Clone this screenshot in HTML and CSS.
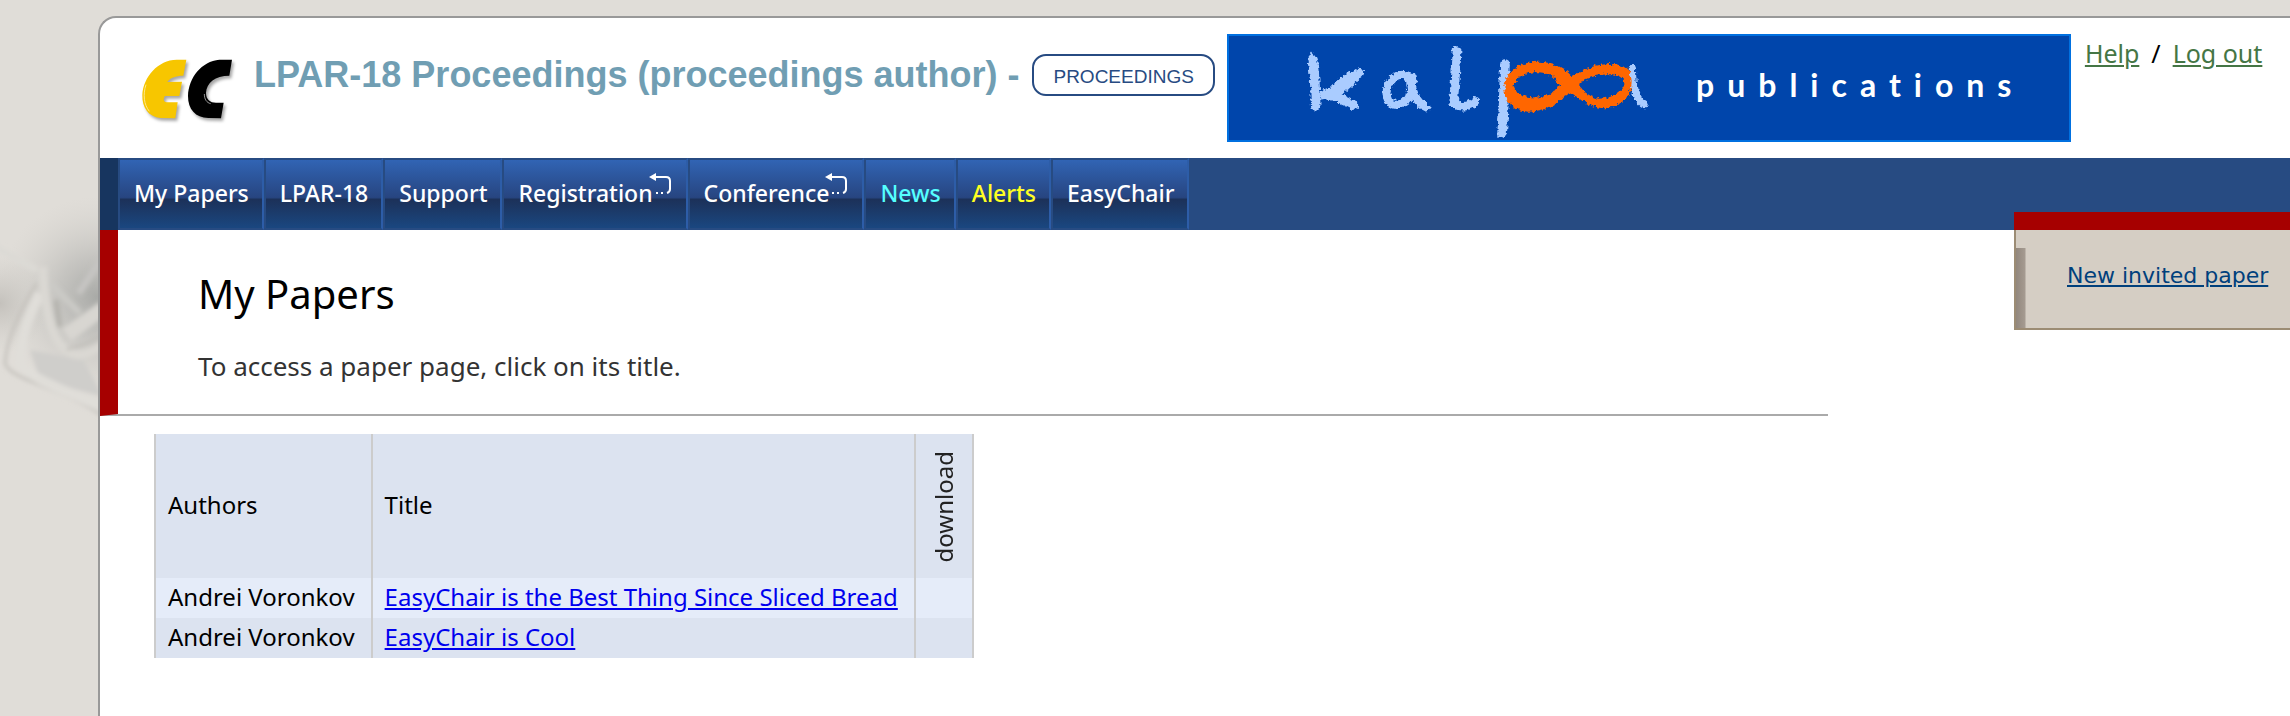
FILE: index.html
```html
<!DOCTYPE html>
<html lang="en">
<head>
<meta charset="utf-8">
<title>My Papers</title>
<link rel="stylesheet" href="styles.css">
</head>
<body>
<svg class="backdrop" width="98" height="560" viewBox="0 0 294 1680" aria-hidden="true">
  <defs>
    <filter id="soft" filterUnits="userSpaceOnUse" x="-60" y="0" width="440" height="1000"><feGaussianBlur stdDeviation="6"/></filter>
    <radialGradient id="shade" gradientUnits="userSpaceOnUse" cx="290" cy="440" r="300">
      <stop offset="0" stop-color="#a9aaa7"/>
      <stop offset=".4" stop-color="#b4b4b1" stop-opacity=".6"/>
      <stop offset="1" stop-color="#d0cec9" stop-opacity="0"/>
    </radialGradient>
    <radialGradient id="dusk" gradientUnits="userSpaceOnUse" cx="0" cy="460" r="150">
      <stop offset="0" stop-color="#c4c1bc"/>
      <stop offset="1" stop-color="#d0cec9" stop-opacity="0"/>
    </radialGradient>
  </defs>
  <g transform="translate(0 450)">
    <rect width="300" height="900" fill="url(#shade)"/>
    <rect width="300" height="900" fill="url(#dusk)"/>
    <g fill="none" filter="url(#soft)">
      <path d="M90 600 L250 630 L310 740 L120 690Z" fill="#cfcecb"/>
      <path d="M110 400 C60 480 20 560 15 640 C30 690 180 710 310 798" stroke="#c6c3be" stroke-width="9"/>
      <path d="M120 430 C80 510 60 570 62 640 C90 690 200 720 310 775" stroke="#e0ded9" stroke-width="30"/>
      <path d="M-20 288 L110 360" stroke="#dcdad5" stroke-width="20"/>
      <path d="M168 450 L180 530" stroke="#b5b4af" stroke-width="16"/>
      <path d="M150 400 L240 490" stroke="#cbcac6" stroke-width="18"/>
      <path d="M200 555 L310 475" stroke="#d8d6d1" stroke-width="44"/>
      <path d="M128 350 C135 480 150 600 230 615 C265 615 285 600 310 585" stroke="#dad8d3" stroke-width="26"/>
      <path d="M200 598 C240 590 270 575 310 555" stroke="#bfbdb8" stroke-width="7"/>
      <path d="M235 430 L310 320" stroke="#c6c5c2" stroke-width="20"/>
    </g>
  </g>
</svg>
<div class="panel">
  <header class="header">
    <svg class="logo" width="120" height="80" viewBox="0 0 360 240" role="img" aria-label="EasyChair">
      <g class="logo-shapes">
        <path fill="#f7c600" d="M169 29 L160 77 C138 77 118 84 112 96 L156 95 L148 138 L105 138 C99 146 100 156 110 157 L143 157 L136 205 L92 204 C54 200 36 172 37 135 C40 80 84 30 140 29Z"/>
        <path d="M306 29 L298 77 C255 77 230 98 228 128 C228 148 240 158 258 158 L281 158 L273 205 L235 204 C196 203 174 178 174 138 C176 82 215 34 268 29Z"/>
      </g>
      <path d="M48 104 C38 134 42 164 58 184" fill="none" stroke="#ffe98a" stroke-width="3"/>
      <path d="M223 132 C223 148 230 158 242 161" fill="none" stroke="#ddd" stroke-width="2"/>
    </svg>
    <h1 class="conference">LPAR-18 Proceedings (proceedings author) -</h1>
    <button class="role" type="button">PROCEEDINGS</button>
    <svg class="banner" width="844" height="108" viewBox="0 0 844 108" role="img" aria-label="kalpa publications">
      <defs>
        <filter id="brush" x="-5%" y="-5%" width="110%" height="110%">
          <feTurbulence type="fractalNoise" baseFrequency="0.3" numOctaves="2" seed="4"/>
          <feDisplacementMap in="SourceGraphic" scale="6" xChannelSelector="R" yChannelSelector="G"/>
        </filter>
      </defs>
      <rect x="1" y="1" width="842" height="106" fill="#0045ab" stroke="#0070e0" stroke-width="2"/>
      <g filter="url(#brush)">
        <g transform="translate(-16 -14) scale(.33333)" fill="none" stroke="#aaccff" stroke-width="29" stroke-linecap="round" stroke-linejoin="round">
          <path d="M303 116 C312 160 313 200 314 258"/>
          <path d="M446 158 C420 175 395 205 340 224 C375 225 410 245 428 256" stroke-width="27"/>
          <path d="M420 175 L380 208" stroke-width="40"/>
          <path d="M606 178 C570 145 528 178 526 222 C532 262 560 262 590 238 C604 226 602 196 592 168 M602 170 C600 215 618 250 646 262" stroke-width="24"/>
          <path d="M738 92 C736 150 730 200 728 252 C750 262 775 262 792 244" stroke-width="26"/>
          <path d="M882 132 C878 200 880 270 873 340" stroke-width="29"/>
          <path d="M1264 146 C1264 200 1275 240 1302 253" stroke-width="22"/>
          <path fill="#ff6600" stroke="none" fill-rule="evenodd" d="M880 200 C885 150 925 125 985 125 C1030 125 1060 145 1082 168 C1120 145 1160 132 1200 132 C1240 132 1262 150 1262 185 C1262 230 1230 262 1175 265 C1135 262 1110 240 1083 220 C1055 225 1030 275 950 275 C905 272 878 240 880 200Z M908 195 C915 170 945 155 985 157 C1015 160 1035 175 1045 195 C1035 220 1000 235 965 232 C930 230 908 215 908 195Z M1103 193 C1125 172 1170 160 1205 163 C1230 168 1240 178 1240 195 C1230 222 1195 236 1160 236 C1130 228 1112 210 1103 193Z"/>
        </g>
      </g>
      <text class="banner-text" x="469" y="63">publications</text>
    </svg>
    <div class="account"><a href="#">Help</a><span class="slash">/</span><a href="#">Log out</a></div>
  </header>
  <nav class="menu">
    <a class="item" href="#">My Papers</a>
    <a class="item" href="#">LPAR-18</a>
    <a class="item" href="#">Support</a>
    <a class="item" href="#">Registration<svg class="ext" width="24" height="22" viewBox="0 0 24 22" aria-hidden="true"><path d="M0 4 L7 0 V8Z" fill="#fff"/><path d="M6 4 H17 Q21 4 21 8 V16 Q21 19 18 20" fill="none" stroke="#fff" stroke-width="2"/><path d="M7 19h2v2h-2zM12 19h2v2h-2z" fill="#fff"/></svg></a>
    <a class="item" href="#">Conference<svg class="ext" width="24" height="22" viewBox="0 0 24 22" aria-hidden="true"><path d="M0 4 L7 0 V8Z" fill="#fff"/><path d="M6 4 H17 Q21 4 21 8 V16 Q21 19 18 20" fill="none" stroke="#fff" stroke-width="2"/><path d="M7 19h2v2h-2zM12 19h2v2h-2z" fill="#fff"/></svg></a>
    <a class="item news" href="#">News</a>
    <a class="item alerts" href="#">Alerts</a>
    <a class="item" href="#">EasyChair</a>
  </nav>
  <div class="columns">
    <main class="main">
      <div class="intro">
        <h2 class="title">My Papers</h2>
        <p class="hint">To access a paper page, click on its title.</p>
      </div>
      <table class="papers">
        <thead>
          <tr><th scope="col">Authors</th><th scope="col">Title</th><th scope="col" class="dl"><span class="upright">download</span></th></tr>
        </thead>
        <tbody>
          <tr class="odd"><td>Andrei Voronkov</td><td><a href="#">EasyChair is the Best Thing Since Sliced Bread</a></td><td></td></tr>
          <tr><td>Andrei Voronkov</td><td><a href="#">EasyChair is Cool</a></td><td></td></tr>
        </tbody>
      </table>
    </main>
    <aside class="side">
      <div class="side-body"><a href="#">New invited paper</a></div>
    </aside>
  </div>
</div>
</body>
</html>
```
FILE: styles.css
```css
* { box-sizing: border-box; }

body {
  margin: 0;
  background: #e0ddd8;
  color: #000;
  font-family: "Noto Sans", sans-serif;
  font-size: 24px;
  line-height: 32px;
  overflow-x: hidden;
}

.backdrop { position: absolute; left: 0; top: 0; }

.panel {
  position: relative;
  margin: 16px 0 0 98px;
  min-height: calc(100vh - 16px);
  background: #fff;
  border: solid #999;
  border-width: 2px 0 0 2px;
  border-top-left-radius: 18px;
}

.header {
  display: flex;
  align-items: flex-start;
  height: 140px;
  padding: 16px 0 0 30px;
}

.logo { flex: none; margin: 16px 4px 0 0; }
.logo-shapes { filter: drop-shadow(6px 8px 5px rgba(0, 0, 0, .35)); }

.conference {
  margin: 20px 13px 0 0;
  color: #709eb3;
  font: bold 36px/42px "Liberation Sans", Arial, sans-serif;
  white-space: nowrap;
}

.role {
  flex: none;
  height: 42px;
  margin: 20px 12px 0 0;
  padding: 4px 19px 0;
  background: #fff;
  border: 2px solid #274b82;
  border-radius: 14px;
  color: #274b82;
  font: 19px/24px "Liberation Sans", Arial, sans-serif;
}

.banner { flex: none; }
.banner-text { fill: #fff; font-family: Lato, sans-serif; font-size: 32px; font-weight: 700; letter-spacing: 13px; }

.account { margin: 3px 0 0 14px; font-size: 25px; white-space: nowrap; }
.account a { color: #457645; }
.slash { margin: 0 12px; }

.menu {
  display: flex;
  height: 72px;
  background: #274b82;
  border-left: 18px solid #17355f;
}

.item {
  display: flex;
  align-items: center;
  padding: 0 13px 2px 14px;
  border: 2px solid #274b82;
  border-right-color: #2d5da8;
  background: linear-gradient(#3164b4, #274580 55%, #1c3159 58%, #1a4780);
  background-clip: padding-box;
  color: #fff;
  font-weight: 500;
  font-size: 23px;
  text-decoration: none;
}

.news { color: #55ffff; }
.alerts { color: #ffff22; }
.ext { margin: 0 0 18px -4px; }

.columns { display: flex; align-items: flex-start; }
.main { flex: 1; }

.intro {
  margin-right: 186px;
  padding: 36px 0 30px 80px;
  border-left: 18px solid #a60000;
  border-bottom: 2px solid #aaa;
}

.title { margin: 0; font-weight: 400; font-size: 40px; line-height: 56px; }
.hint { margin: 28px 0 0; padding-bottom: 2px; color: #333; font-size: 26px; line-height: 32px; }

.papers { margin: 18px 0 0 54px; border-collapse: collapse; background: #dce3f0; }
.papers th, .papers td {
  height: 40px;
  padding: 0 16px 2px 12px;
  border: solid #ccc;
  border-width: 0 2px;
  font-weight: 400;
  text-align: left;
}
.papers th { height: 144px; }
.papers .dl { padding: 2px 12px 0; }
.papers a { color: #00e; }
.odd { background: #e5ecf9; }

.upright {
  display: block;
  writing-mode: vertical-rl;
  transform: rotate(180deg);
  margin: auto;
  color: #222;
}

.side {
  position: relative;
  flex: none;
  width: 276px;
  margin-top: -18px;
  border-top: 18px solid #a60000;
}

.side-body {
  height: 100px;
  padding: 30px 0 0 51px;
  border: solid #9c8c74;
  border-width: 0 0 2px 2px;
  background: linear-gradient(90deg, #92877d, #a59b91 9px, #d5cec4 10px) 0 18px / 12px 100% no-repeat #d5cec4;
  font-family: "DejaVu Sans", Verdana, sans-serif;
  font-size: 22px;
}
.side-body a { color: #00407c; }
```
